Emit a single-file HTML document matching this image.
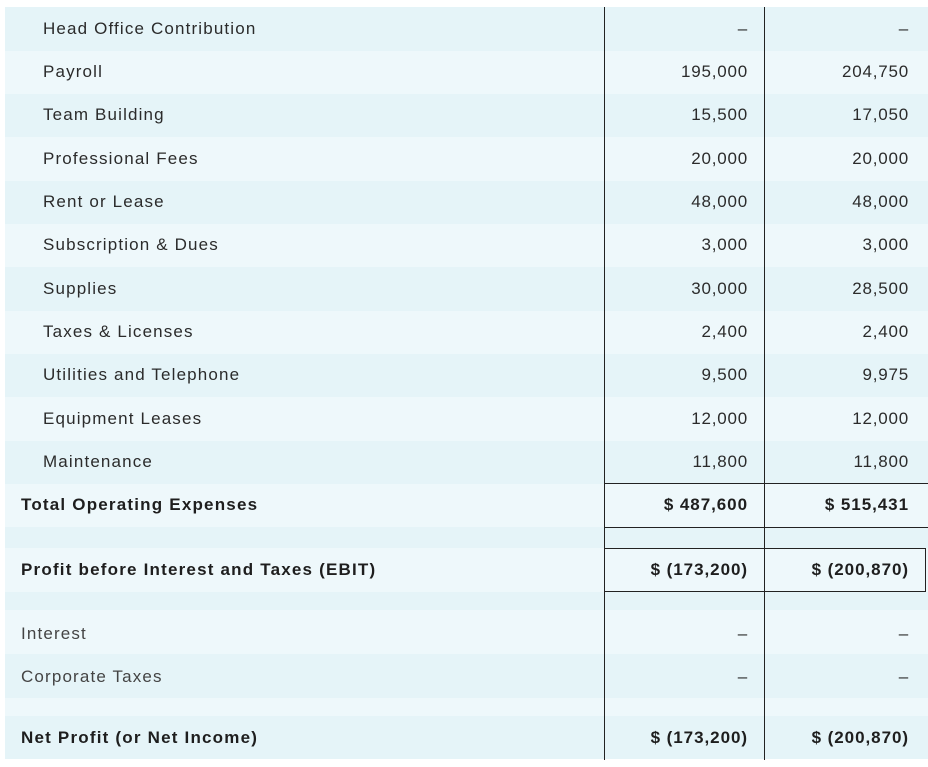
<!DOCTYPE html>
<html><head><meta charset="utf-8"><style>
body{margin:0;width:928px;height:767px;background:#fff;position:relative;overflow:hidden;font-family:"Liberation Sans",sans-serif;font-size:17px;color:#2b2b2b;letter-spacing:1.15px}
.r{position:absolute;left:5px;width:923px}
.d{background:#e5f4f8}.l{background:#eef8fb}
.t{position:absolute;white-space:nowrap;line-height:20px}
.b{font-weight:bold;color:#1e1e1e;letter-spacing:1.2px}
.n{letter-spacing:0.8px}
.b.n{letter-spacing:0.95px}
.v{position:absolute;width:1px;background:#222}
.h{position:absolute;height:1px;background:#222}
</style></head><body>
<div class="r d" style="top:7px;height:44px"></div>
<div class="r l" style="top:51px;height:43px"></div>
<div class="r d" style="top:94px;height:43px"></div>
<div class="r l" style="top:137px;height:44px"></div>
<div class="r d" style="top:181px;height:43px"></div>
<div class="r l" style="top:224px;height:43px"></div>
<div class="r d" style="top:267px;height:44px"></div>
<div class="r l" style="top:311px;height:43px"></div>
<div class="r d" style="top:354px;height:43px"></div>
<div class="r l" style="top:397px;height:44px"></div>
<div class="r d" style="top:441px;height:43px"></div>
<div class="r l" style="top:484px;height:43px"></div>
<div class="r d" style="top:527px;height:21px"></div>
<div class="r l" style="top:548px;height:44px"></div>
<div class="r d" style="top:592px;height:18px"></div>
<div class="r l" style="top:610px;height:44px"></div>
<div class="r d" style="top:654px;height:44px"></div>
<div class="r l" style="top:698px;height:18px"></div>
<div class="r d" style="top:716px;height:43px"></div>

<div class="v" style="left:604px;top:7px;height:753px"></div>
<div class="v" style="left:764px;top:7px;height:753px"></div>
<div class="h" style="left:604px;top:483px;width:324px"></div>
<div class="h" style="left:604px;top:527px;width:324px"></div>
<div class="h" style="left:604px;top:548px;width:322px"></div>
<div class="h" style="left:604px;top:591px;width:322px"></div>
<div class="v" style="left:925px;top:548px;height:44px"></div>

<div class="t" style="left:43px;top:19px">Head Office Contribution</div>
<div class="t" style="left:43px;top:62px">Payroll</div>
<div class="t" style="left:43px;top:105px">Team Building</div>
<div class="t" style="left:43px;top:149px">Professional Fees</div>
<div class="t" style="left:43px;top:192px">Rent or Lease</div>
<div class="t" style="left:43px;top:235px">Subscription &amp; Dues</div>
<div class="t" style="left:43px;top:279px">Supplies</div>
<div class="t" style="left:43px;top:322px">Taxes &amp; Licenses</div>
<div class="t" style="left:43px;top:365px">Utilities and Telephone</div>
<div class="t" style="left:43px;top:409px">Equipment Leases</div>
<div class="t" style="left:43px;top:452px">Maintenance</div>
<div class="t b" style="left:21px;top:495px">Total Operating Expenses</div>
<div class="t b" style="left:21px;top:560px">Profit before Interest and Taxes (EBIT)</div>
<div class="t" style="left:21px;top:624px;color:#444">Interest</div>
<div class="t" style="left:21px;top:667px;color:#444">Corporate Taxes</div>
<div class="t b" style="left:21px;top:728px">Net Profit (or Net Income)</div>

<div class="t n" style="right:180px;top:19px">–</div><div class="t n" style="right:19px;top:19px">–</div>
<div class="t n" style="right:180px;top:62px">195,000</div><div class="t n" style="right:19px;top:62px">204,750</div>
<div class="t n" style="right:180px;top:105px">15,500</div><div class="t n" style="right:19px;top:105px">17,050</div>
<div class="t n" style="right:180px;top:149px">20,000</div><div class="t n" style="right:19px;top:149px">20,000</div>
<div class="t n" style="right:180px;top:192px">48,000</div><div class="t n" style="right:19px;top:192px">48,000</div>
<div class="t n" style="right:180px;top:235px">3,000</div><div class="t n" style="right:19px;top:235px">3,000</div>
<div class="t n" style="right:180px;top:279px">30,000</div><div class="t n" style="right:19px;top:279px">28,500</div>
<div class="t n" style="right:180px;top:322px">2,400</div><div class="t n" style="right:19px;top:322px">2,400</div>
<div class="t n" style="right:180px;top:365px">9,500</div><div class="t n" style="right:19px;top:365px">9,975</div>
<div class="t n" style="right:180px;top:409px">12,000</div><div class="t n" style="right:19px;top:409px">12,000</div>
<div class="t n" style="right:180px;top:452px">11,800</div><div class="t n" style="right:19px;top:452px">11,800</div>
<div class="t b n" style="right:180px;top:495px">$ 487,600</div><div class="t b n" style="right:19px;top:495px">$ 515,431</div>
<div class="t b n" style="right:180px;top:560px">$ (173,200)</div><div class="t b n" style="right:19px;top:560px">$ (200,870)</div>
<div class="t n" style="right:180px;top:624px">–</div><div class="t n" style="right:19px;top:624px">–</div>
<div class="t n" style="right:180px;top:667px">–</div><div class="t n" style="right:19px;top:667px">–</div>
<div class="t b n" style="right:180px;top:728px">$ (173,200)</div><div class="t b n" style="right:19px;top:728px">$ (200,870)</div>
</body></html>
